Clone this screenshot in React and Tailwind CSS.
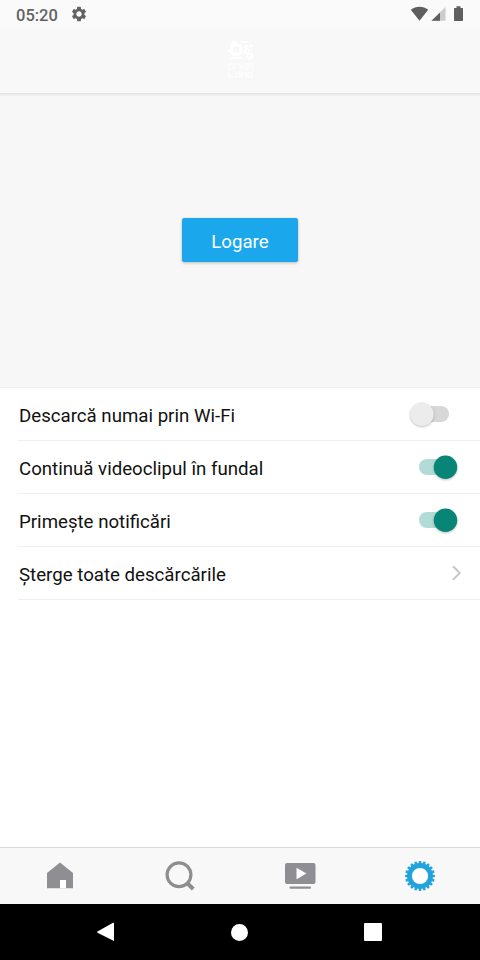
import React, { useState } from 'react';
import { MdSettings } from 'react-icons/md';

const gearTeeth = Array.from({ length: 20 }, (_, i) => i * 18);

const Toggle = ({ checked, onChange }) => (
  <button type="button" role="switch" aria-checked={checked} onClick={onChange} className="mr-4">
    <svg width="64" height="32" viewBox="0 0 64 32" className="block">
      {checked ? (
        <>
          <rect x="19" y="8" width="38" height="16" rx="8" fill="#b2dbd6" />
          <circle cx="45.5" cy="16.3" r="11.7" fill="#078577" className="drop-shadow-[0_1px_1px_rgba(0,0,0,0.25)]" />
        </>
      ) : (
        <>
          <rect x="11" y="8" width="38" height="16" rx="8" fill="#d7d7d7" />
          <circle cx="22" cy="16.3" r="11.7" fill="#ececec" className="drop-shadow-[0_1px_1px_rgba(0,0,0,0.25)]" />
        </>
      )}
    </svg>
  </button>
);

const Row = ({ label, children }) => (
  <div className="ml-[18px] h-[53px] flex items-center justify-between border-b border-[#f0f0f0]">
    <span className="pl-px pt-[3px] text-[18.66px] leading-6 text-[#111111]">{label}</span>
    {children}
  </div>
);

const StatusBar = () => (
  <div className="h-7 shrink-0 flex items-center justify-between bg-[#fafafa] pl-4 pr-4 text-[#636363]">
    <div className="flex items-center gap-3">
      <span className="pt-[3px] text-[16.5px] leading-5 font-medium">05:20</span>
      <MdSettings className="size-[18px]" />
    </div>
    <svg width="54" height="18" viewBox="0 0 54 18" fill="#5f5f5f">
      <path d="M.8 4.8C5.8.8 13.2.8 18.2 4.8L9.5 15.8Z" />
      <path d="M21.5 15.8 35.5 2v13.8Z" fill="#cccccc" />
      <path d="M21.5 15.8 30 7.4v8.4Z" />
      <path d="M44.5 3H46.5V1.2h4V3H52.5Q53 3 53 3.5V15.3Q53 16 52.3 16H44.7Q44 16 44 15.3V3.5Q44 3 44.5 3Z" />
    </svg>
  </div>
);

const Header = () => (
  <header className="relative z-10 h-[66px] shrink-0 flex justify-center bg-[#f8f8f8] border-b border-[#e6e6e6] shadow-[0_1px_2px_rgba(0,0,0,0.08)]">
    <svg width="32" height="44" viewBox="0 0 32 44" className="mt-2.5 ml-0.5" fill="none" stroke="#ffffff">
      <rect x="6.5" y="7" width="9.5" height="9" rx="2.5" strokeWidth="3" />
      <path d="M7 4.5h5M16 4h7M19 8.5h4M24 8h4M3 13h3M6 20h11" strokeWidth="1.8" />
      <circle cx="22" cy="13" r="2" strokeWidth="2" />
      <circle cx="25" cy="18" r="2.5" strokeWidth="2" />
      <path d="M4 26v5h4v-5ZM10 31v-5h5v5M17 26v5M20 26h3v5h-3ZM25 31v-5h3v5M4 34v5h5M11 35v4h4v-4ZM17 40v-5h4v5M23 35h4v4h-4ZM15 42v1.5" strokeWidth="1.2" opacity="0.8" />
    </svg>
  </header>
);

const TabBar = () => (
  <nav className="h-[57px] shrink-0 grid grid-cols-4 border-t border-[#d9d9d9] bg-[#f8f8f8] pt-2">
    <button type="button" aria-label="Acasă" className="flex justify-center">
      <svg width="40" height="40" viewBox="0 0 40 40">
        <path d="M20 6.5 33 17V32.2H7V17Z" fill="#8e8e93" />
        <path d="M20 24h6v8.2h-6Z" fill="#ffffff" />
      </svg>
    </button>
    <button type="button" aria-label="Căutare" className="flex justify-center">
      <svg width="40" height="40" viewBox="0 0 40 40" fill="none" stroke="#8e8e8e">
        <circle cx="19" cy="18.7" r="11.9" strokeWidth="3.2" />
        <path d="m27.5 27.5 5.8 5.5" strokeWidth="4" />
      </svg>
    </button>
    <button type="button" aria-label="Videoclipuri" className="flex justify-center">
      <svg width="40" height="40" viewBox="0 0 40 40" fill="#8e8e93">
        <rect x="5" y="7" width="30.5" height="21" rx="2" />
        <rect x="9.5" y="30.5" width="21.5" height="2.2" rx="1" />
        <path d="M16.5 11.7 26.5 17.5 16.5 23.3Z" fill="#ffffff" />
      </svg>
    </button>
    <button type="button" aria-label="Setări" className="flex justify-center">
      <svg width="40" height="40" viewBox="0 0 40 40">
        <circle cx="20" cy="20" r="10.5" fill="#ffffff" stroke="#21a3dd" strokeWidth="4.8" />
        {gearTeeth.map((angle) => (
          <path key={angle} d="M18.4 8.5 18.9 5h2.2l.5 3.5Z" fill="#21a3dd" transform={`rotate(${angle} 20 20)`} />
        ))}
      </svg>
    </button>
  </nav>
);

const App = () => {
  const [wifiOnly, setWifiOnly] = useState(false);
  const [background, setBackground] = useState(true);
  const [notifications, setNotifications] = useState(true);

  return (
    <div className="w-[480px] h-[960px] flex flex-col overflow-hidden bg-white font-[Roboto,sans-serif]">
      <StatusBar />
      <Header />

      <section className="h-[294px] shrink-0 flex items-center justify-center bg-[#f7f7f7] border-b border-[#f0f0f0] pb-px">
        <button type="button" className="w-[116px] h-11 rounded-[2px] bg-[#1aa7ec] pt-[3px] text-[18.66px] leading-6 text-white shadow-[0_1px_3px_rgba(0,0,0,0.25)]">
          Logare
        </button>
      </section>

      <main className="flex-1">
        <Row label="Descarcă numai prin Wi-Fi">
          <Toggle checked={wifiOnly} onChange={() => setWifiOnly(!wifiOnly)} />
        </Row>
        <Row label="Continuă videoclipul în fundal">
          <Toggle checked={background} onChange={() => setBackground(!background)} />
        </Row>
        <Row label="Primește notificări">
          <Toggle checked={notifications} onChange={() => setNotifications(!notifications)} />
        </Row>
        <Row label="Șterge toate descărcările">
          <svg width="12" height="18" viewBox="0 0 12 18" className="mr-[17px]" fill="none" stroke="#c7c7cc" strokeWidth="2">
            <path d="m2 2.2 6.7 6.8L2 15.8" />
          </svg>
        </Row>
      </main>

      <TabBar />

      <footer className="h-14 shrink-0 flex items-center justify-between bg-black pl-24 pr-[98px]">
        <svg width="19" height="20" viewBox="0 0 19 20" fill="#ffffff">
          <path d="M18 1.2V19L1.5 10.7Q.8 10 1.5 9.5L17 .8Q18 .4 18 1.2Z" />
        </svg>
        <div className="size-[17px] rounded-full bg-white" />
        <div className="size-[18px] rounded-[1px] bg-white" />
      </footer>
    </div>
  );
};

export default App;
